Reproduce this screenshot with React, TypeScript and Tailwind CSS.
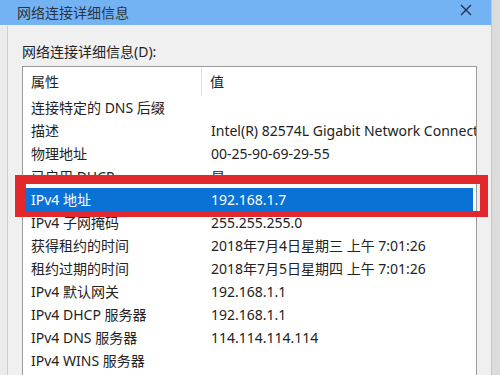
const rows: { k: string; v: string; sel?: boolean }[] = [
  { k: '连接特定的 DNS 后缀', v: '' },
  { k: '描述', v: 'Intel(R) 82574L Gigabit Network Connection' },
  { k: '物理地址', v: '00-25-90-69-29-55' },
  { k: '已启用 DHCP', v: '是' },
  { k: 'IPv4 地址', v: '192.168.1.7', sel: true },
  { k: 'IPv4 子网掩码', v: '255.255.255.0' },
  { k: '获得租约的时间', v: '2018年7月4日星期三 上午 7:01:26' },
  { k: '租约过期的时间', v: '2018年7月5日星期四 上午 7:01:26' },
  { k: 'IPv4 默认网关', v: '192.168.1.1' },
  { k: 'IPv4 DHCP 服务器', v: '192.168.1.1' },
  { k: 'IPv4 DNS 服务器', v: '114.114.114.114' },
  { k: 'IPv4 WINS 服务器', v: '' },
];

export default function App() {
  return (
    <div className="relative w-[500px] h-[375px] overflow-hidden bg-[#e2e2e2] font-['Noto_Sans','Noto_Sans_CJK_SC',sans-serif] text-[14px] text-[#222]">
      <div className="flex h-full">
        <div className="w-[491px] flex flex-col">
          {/* title bar */}
          <div className="h-[26px] bg-[#74b3f3] flex items-center justify-between pl-[17px] pr-[19px] border-b border-[#e9f1f9]">
            <span className="leading-5 text-[#2b3440]">网络连接详细信息</span>
            <svg width="12" height="12" viewBox="0 0 12 12" className="-mt-[6px]">
              <path d="M1 1L11 11M11 1L1 11" stroke="#1f2d4d" strokeWidth="1.3" />
            </svg>
          </div>

          <div className="flex flex-1 min-h-0">
            <div className="w-[8px] bg-[#ebebeb] border-r border-[#cfcfcf]" />
            <div className="flex-1 bg-[#f0f0f0] pl-[14px] pt-[16px] flex flex-col min-h-0">
              <div className="leading-5">网络连接详细信息(D):</div>
              <div className="mt-[4px] w-[455px] flex-1 bg-white border border-[#9a9a9a] border-b-0 overflow-hidden">
                {/* header */}
                <div className="flex h-[29px] items-center">
                  <div className="w-[179px] h-full flex items-center pl-[8px] border-r border-[#e3e3e3]">属性</div>
                  <div className="pl-[8px]">值</div>
                </div>
                {rows.map((r) => (
                  <div
                    key={r.k}
                    className={
                      r.sel
                        ? 'flex h-[23px] items-center whitespace-nowrap bg-[#0a72d4] text-white mr-[3px]'
                        : 'flex h-[23px] items-center whitespace-nowrap'
                    }
                  >
                    <div className="w-[180px] shrink-0 pl-[8px] overflow-hidden">{r.k}</div>
                    <div className="pl-[8px] overflow-hidden">{r.v}</div>
                  </div>
                ))}
              </div>
            </div>
          </div>
        </div>
        <div className="flex-1 bg-[#dcdcdc] border-l border-[#c4c4c4]" />
      </div>

      {/* red annotation frame */}
      <div className="absolute left-[15px] top-[175px] w-[473px] h-[42px] border-[#e3282d] border-t-[9px] border-l-[11px] border-r-[8px] border-b-[6px]" />
    </div>
  );
}
